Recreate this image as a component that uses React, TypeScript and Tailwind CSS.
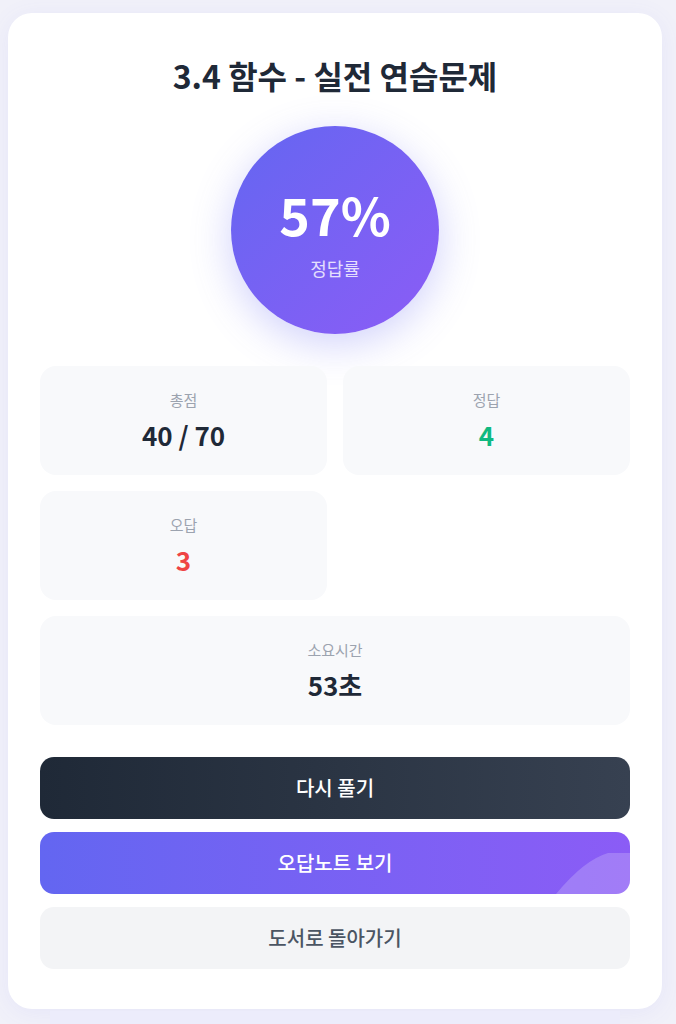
import React from "react";

function Stat({ label, value, color, span }: { label: string; value: string; color: string; span?: boolean }) {
  return (
    <div className={`flex flex-col items-center rounded-2xl bg-[#f8f9fb] py-6 ${span ? "col-span-2" : ""}`}>
      <div className="text-[15px] leading-5 text-[#9ca3af]">{label}</div>
      <div className={`mt-[9px] text-[26px] font-bold leading-[32px] ${color}`}>{value}</div>
    </div>
  );
}

export default function App() {
  return (
    <div
      className="min-h-screen bg-[#f1f1f9] pl-2 pr-[14px] pt-[13px]"
      style={{ fontFamily: '"Noto Sans CJK KR", "Noto Sans", sans-serif' }}
    >
      <div className="rounded-[24px] bg-white px-8 pt-[42px] pb-10 shadow-[0_4px_24px_rgba(99,102,241,0.08)]">
        <h1 className="text-center text-[32px] font-bold leading-10 text-[#1f2937]">3.4 함수 - 실전 연습문제</h1>

        <div className="mt-[31px] flex justify-center">
          <div className="flex h-52 w-52 flex-col items-center justify-center rounded-full bg-gradient-to-br from-[#6366f1] to-[#8b5cf6] shadow-[0_10px_40px_rgba(99,102,241,0.3)]">
            <div className="mt-[4px] text-[52px] font-bold leading-[60px] text-white">57%</div>
            <div className="mt-3 text-lg leading-6 text-white/80">정답률</div>
          </div>
        </div>

        <div className="mt-8 grid grid-cols-2 gap-4">
          <Stat label="총점" value="40 / 70" color="text-[#1f2937]" />
          <Stat label="정답" value="4" color="text-[#10b981]" />
          <Stat label="오답" value="3" color="text-[#ef4444]" />
          <Stat label="소요시간" value="53초" color="text-[#1f2937]" span />
        </div>

        <div className="mt-8 flex flex-col gap-[13px]">
          <button className="flex h-[62px] items-center justify-center rounded-[14px] bg-gradient-to-r from-[#1f2937] to-[#374151] text-xl font-medium text-white">
            다시 풀기
          </button>
          <button className="relative flex h-[62px] items-center justify-center overflow-hidden rounded-[14px] bg-gradient-to-r from-[#6366f1] to-[#8b5cf6] text-xl font-medium text-white">
            <span className="relative">오답노트 보기</span>
            <svg className="absolute bottom-0 right-0" width="74" height="42" viewBox="0 0 74 42">
              <path d="M0 42 Q28 8 52 1 L74 1 L74 42 Z" fill="white" fillOpacity="0.2" />
            </svg>
          </button>
          <button className="flex h-[62px] items-center justify-center rounded-[14px] bg-[#f3f4f6] text-xl font-medium text-[#4b5563]">
            도서로 돌아가기
          </button>
        </div>
      </div>
      <div className="mx-[42px] mt-[2px] h-4 bg-[#ececfb]" />
    </div>
  );
}
